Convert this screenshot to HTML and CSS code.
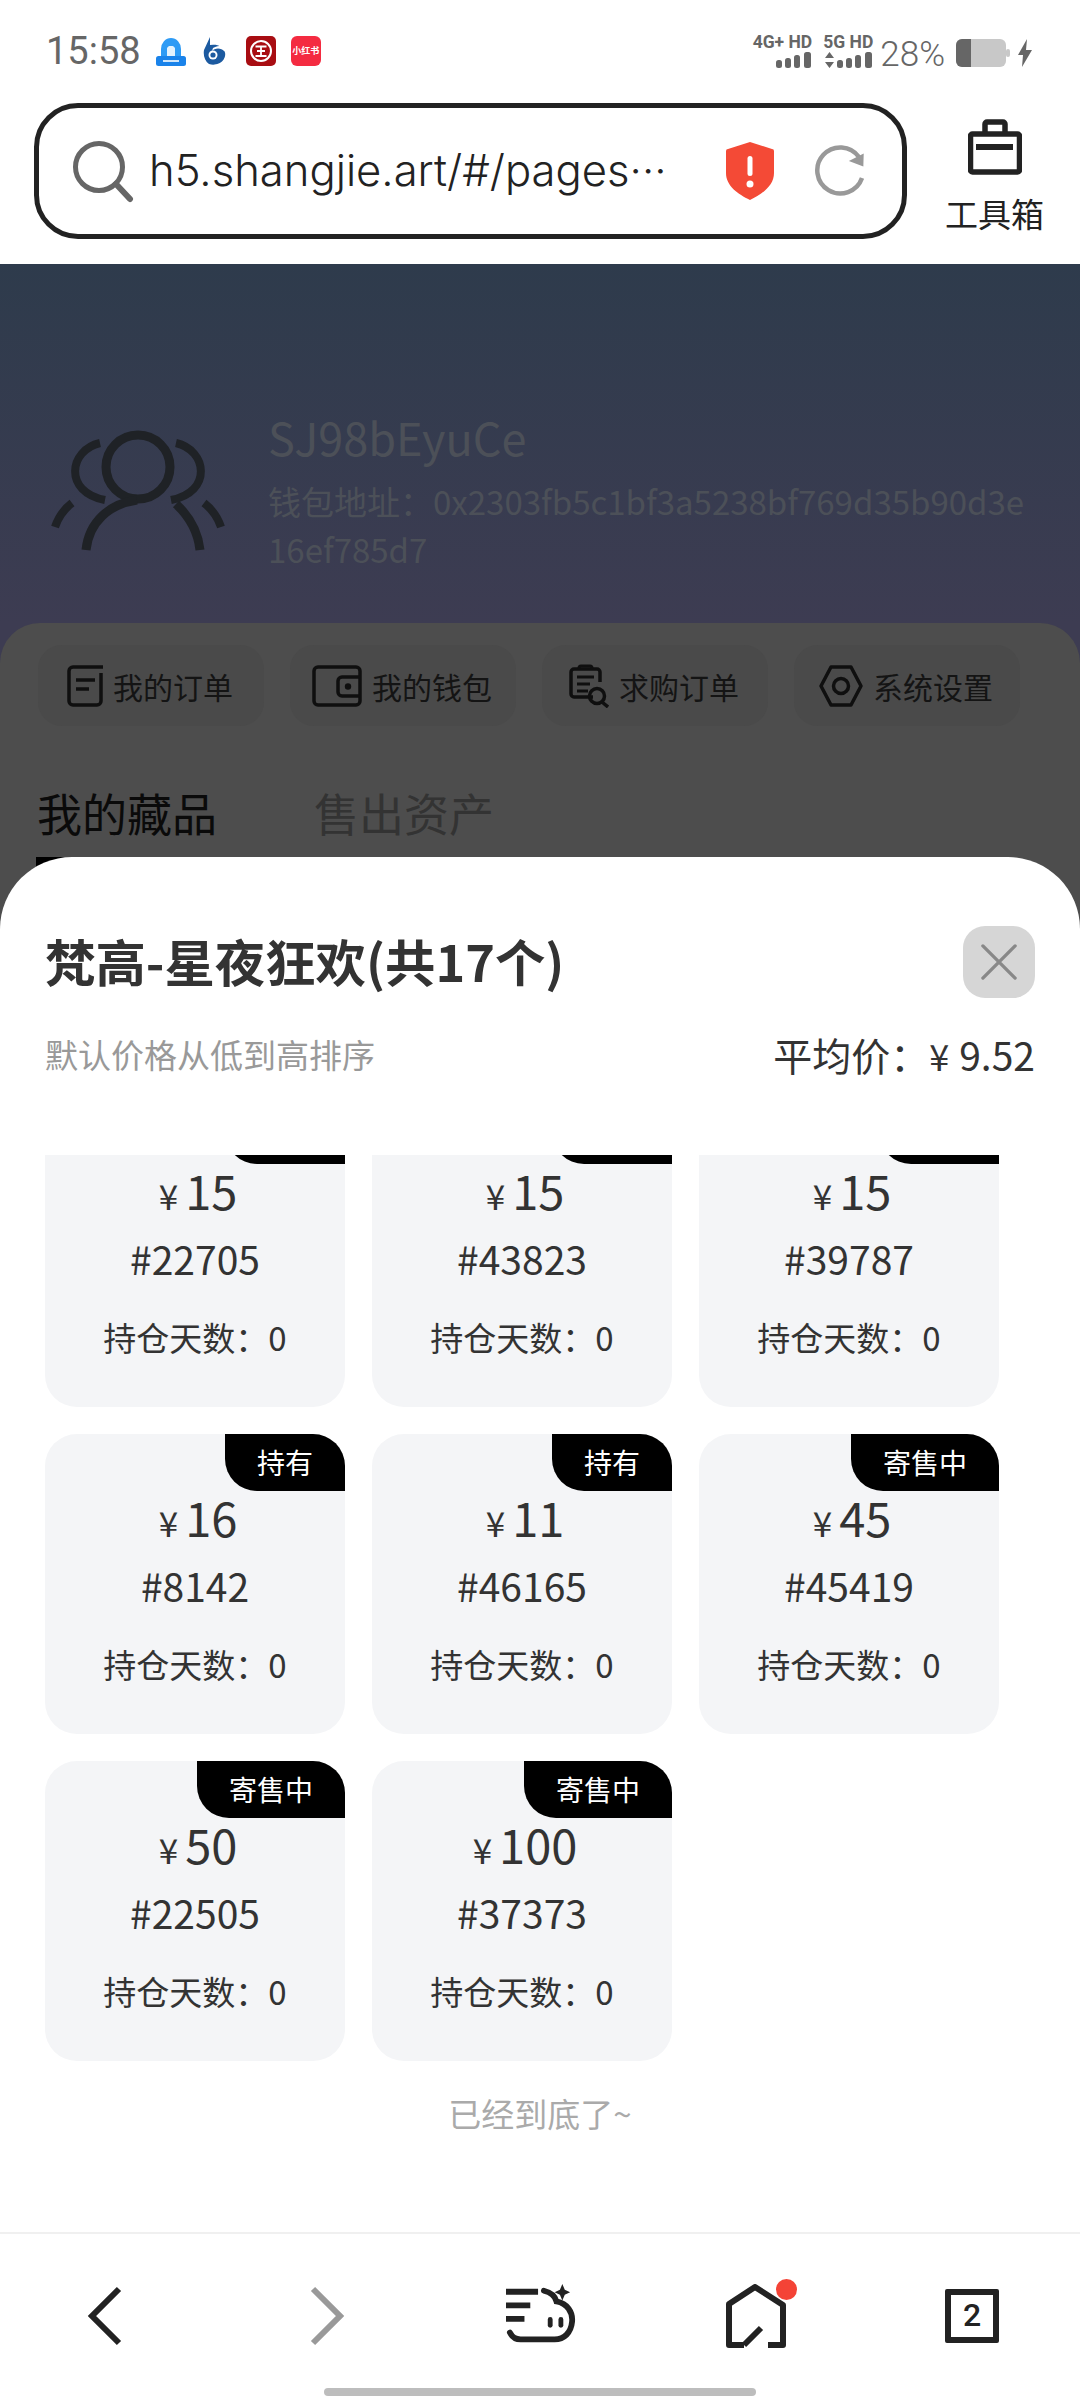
FILE: index.html
```html
<!DOCTYPE html>
<html lang="zh-CN">
<head>
    <meta charset="UTF-8">
    <meta name="viewport" content="width=device-width, initial-scale=1.0">
    <title>我的藏品</title>
    <link rel="stylesheet" href="styles.css">
</head>
<body>

<div class="status-bar">
    <div class="status-left">
        <span class="time">15:58</span>
        <svg class="app-icon" viewBox="0 0 30 30"><path d="M5 21V13a10 11 0 0 1 20 0v8h-6v-7a4 4 0 0 0-8 0v7z" fill="#2e9bf5"/><path d="M11 21v-7a4 4 0 0 1 8 0v7z" fill="#e4f2fd"/><rect x="0" y="20" width="30" height="10" rx="2.500" fill="#1a83ea"/><rect x="7" y="24" width="16" height="2" fill="#cfe6fb"/></svg>
        <svg class="app-icon" viewBox="0 0 30 30"><path d="M3 14 9 1v8a12 10 0 1 1-1 19C4 25 2 20 3 14z" fill="#1c5aa0"/><path d="M11 15a7 5 0 0 1 12 0h7c-2-5-10-7-18-3z" fill="#fff"/><circle cx="12" cy="19" r="4.500" fill="#fff"/><circle cx="12" cy="19" r="2.600" fill="#1c5aa0"/></svg>
        <svg class="app-icon" viewBox="0 0 30 30"><rect width="30" height="30" rx="5" fill="#a80d12"/><circle cx="15" cy="15" r="10" fill="none" stroke="#fff" stroke-width="2"/><path d="M9.500 10.500h11M11 15h8M9.500 20h11M15 10.500v9.500" stroke="#fff" stroke-width="1.800" fill="none"/></svg>
        <span class="app-tile">小红书</span>
    </div>
    <div class="status-right">
        <div class="net">
            <span class="net-label">4G+ HD</span>
            <svg class="net-bars" width="36" height="16" viewBox="0 0 36 16"><rect x="0" y="8" width="6" height="8" rx="2.500"/><rect x="9" y="6" width="6" height="10" rx="2.500"/><rect x="18" y="3" width="6" height="13" rx="2.500"/><rect x="28" y="0" width="7" height="16" rx="2.500"/></svg>
        </div>
        <div class="net">
            <span class="net-label">5G HD</span>
            <svg class="net-bars" width="48" height="16" viewBox="0 0 48 16"><path d="M4.500 0 9 6H0zM4.500 16 0 10h9z"/><rect x="12" y="8" width="6" height="8" rx="2.500"/><rect x="21" y="6" width="6" height="10" rx="2.500"/><rect x="30" y="3" width="6" height="13" rx="2.500"/><rect x="40" y="0" width="7" height="16" rx="2.500"/></svg>
        </div>
        <span class="battery-text">28%</span>
        <svg width="54" height="28" viewBox="0 0 54 28"><rect x="0" y="0" width="50" height="28" rx="6" fill="#c8c8c8"/><path d="M6 0h9v28H6a6 6 0 0 1-6-6V6a6 6 0 0 1 6-6z" fill="#666"/><rect x="50" y="10" width="4" height="8" rx="2" fill="#c8c8c8"/></svg>
        <svg class="bolt" width="14" height="28" viewBox="0 0 14 28"><path d="M9 0 0 16h5l-1 12 10-17H8z" fill="#666"/></svg>
    </div>
</div>

<div class="toolbar">
    <div class="address-box">
        <svg width="64" height="64" viewBox="0 0 64 64"><circle cx="29" cy="28" r="23.500" fill="none" stroke="#666" stroke-width="5"/><path d="M46 45 60 60" stroke="#666" stroke-width="6" stroke-linecap="round"/></svg>
        <span class="url">h5.shangjie.art/#/pages···</span>
        <svg class="shield" width="48" height="58" viewBox="0 0 48 58"><path d="M24 0 46 7a2 2 0 0 1 2 2v22c0 13-12 21-24 27C12 52 0 44 0 31V9a2 2 0 0 1 2-2z" fill="#f44a36"/><rect x="21.500" y="14" width="5" height="20" rx="2.500" fill="#fff"/><circle cx="24" cy="42" r="3.500" fill="#fff"/></svg>
        <svg class="reload" width="52" height="52" viewBox="0 0 52 52"><path d="M47 33A23 23 0 1 1 44 12" fill="none" stroke="#999" stroke-width="4.500"/><path d="M34 17 49 21 48 8z" fill="#999" transform="rotate(6 44 15)"/></svg>
    </div>
    <div class="toolbox">
        <svg width="54" height="56" viewBox="0 0 54 56"><path d="M17 13V5a2 2 0 0 1 2-2h16a2 2 0 0 1 2 2v8" fill="none" stroke="#222" stroke-width="5.500"/><rect x="2.500" y="15" width="49" height="38" rx="2" fill="none" stroke="#222" stroke-width="5.500"/><rect x="8" y="25" width="37" height="6" fill="#222"/></svg>
        <span class="toolbox-label">工具箱</span>
    </div>
</div>

<div class="page">
    <div class="profile">
        <svg class="avatar" width="174" height="122" viewBox="0 0 174 122">
            <g fill="none" stroke="#1f2226" stroke-width="9">
                <circle cx="87" cy="37" r="32"/>
                <path d="M35 120C38 92 58 74 86 70"/>
                <path d="M125 74C138 86 147 102 149 120"/>
                <path d="M49 13C18 20 12 62 54 70" stroke-width="8"/>
                <path d="M125 13C156 20 162 62 120 70" stroke-width="8"/>
                <path d="M21 73C12 80 7 88 4 97" stroke-width="8"/>
                <path d="M153 73C162 80 167 88 170 97" stroke-width="8"/>
            </g>
        </svg>
        <div class="profile-text">
            <div class="nickname">SJ98bEyuCe</div>
            <div class="wallet">钱包地址&#xFF1A;0x2303fb5c1bf3a5238bf769d35b90d3e16ef785d7</div>
        </div>
    </div>

    <div class="panel">
        <div class="menu-row">
            <div class="menu-item">
                <svg width="36" height="42" viewBox="0 0 36 42"><path d="M36 2H6a4 4 0 0 0-4 4v30a4 4 0 0 0 4 4h24a4 4 0 0 0 4-4V8" fill="none" stroke="#0f0f0f" stroke-width="3.500"/><path d="M9 15h19M9 24h13" stroke="#0f0f0f" stroke-width="3.500"/></svg>
                <span>我的订单</span>
            </div>
            <div class="menu-item">
                <svg width="50" height="42" viewBox="0 0 50 42"><rect x="2" y="2" width="46" height="38" rx="4" fill="none" stroke="#0f0f0f" stroke-width="3.500"/><path d="M48 12H30a4 4 0 0 0-4 4v11a4 4 0 0 0 4 4h18" fill="none" stroke="#0f0f0f" stroke-width="3.500"/><circle cx="36" cy="21.500" r="3.200" fill="#0f0f0f"/></svg>
                <span>我的钱包</span>
            </div>
            <div class="menu-item">
                <svg width="40" height="44" viewBox="0 0 40 44"><path d="M24 33H5a3 3 0 0 1-3-3V8a3 3 0 0 1 3-3h23a3 3 0 0 1 3 3v10" fill="none" stroke="#0f0f0f" stroke-width="3.500"/><path d="M10 5V4a2 2 0 0 1 2-2h9a2 2 0 0 1 2 2v1M8 13h17M8 20h13M8 27h11" fill="none" stroke="#0f0f0f" stroke-width="3"/><circle cx="28" cy="32" r="7.500" fill="none" stroke="#0f0f0f" stroke-width="3.500"/><path d="M33 38 39 43" stroke="#0f0f0f" stroke-width="3.500"/></svg>
                <span>求购订单</span>
            </div>
            <div class="menu-item">
                <svg width="44" height="42" viewBox="0 0 44 42"><path d="M12 2h20l10 19-10 19H12L2 21z" fill="none" stroke="#0f0f0f" stroke-width="3.500" stroke-linejoin="round"/><circle cx="22" cy="21" r="7.500" fill="none" stroke="#0f0f0f" stroke-width="3.500"/></svg>
                <span>系统设置</span>
            </div>
        </div>
        <div class="tabs">
            <div class="tab tab-active">我的藏品</div>
            <div class="tab">售出资产</div>
        </div>
    </div>
</div>

<div class="sheet">
    <div class="sheet-head">
        <div class="sheet-title">梵高-星夜狂欢(共17个)</div>
        <div class="close-btn">
            <svg width="36" height="36" viewBox="0 0 38 38"><path d="M2 2 36 36M36 2 2 36" stroke="#888" stroke-width="3.500" stroke-linecap="round"/></svg>
        </div>
    </div>
    <div class="sheet-sub">
        <span class="sort-note">默认价格从低到高排序</span>
        <span class="avg-price">平均价&#xFF1A;<span class="avg-yen">¥</span>9.52</span>
    </div>

    <div class="list-clip">
        <div class="grid">
            <div class="card"><span class="badge">持有</span><div class="price"><span class="yen">¥</span>15</div><div class="code">#22705</div><div class="days">持仓天数&#xFF1A;0</div></div>
            <div class="card"><span class="badge">持有</span><div class="price"><span class="yen">¥</span>15</div><div class="code">#43823</div><div class="days">持仓天数&#xFF1A;0</div></div>
            <div class="card"><span class="badge">持有</span><div class="price"><span class="yen">¥</span>15</div><div class="code">#39787</div><div class="days">持仓天数&#xFF1A;0</div></div>
            <div class="card"><span class="badge">持有</span><div class="price"><span class="yen">¥</span>16</div><div class="code">#8142</div><div class="days">持仓天数&#xFF1A;0</div></div>
            <div class="card"><span class="badge">持有</span><div class="price"><span class="yen">¥</span>11</div><div class="code">#46165</div><div class="days">持仓天数&#xFF1A;0</div></div>
            <div class="card"><span class="badge">寄售中</span><div class="price"><span class="yen">¥</span>45</div><div class="code">#45419</div><div class="days">持仓天数&#xFF1A;0</div></div>
            <div class="card"><span class="badge">寄售中</span><div class="price"><span class="yen">¥</span>50</div><div class="code">#22505</div><div class="days">持仓天数&#xFF1A;0</div></div>
            <div class="card"><span class="badge">寄售中</span><div class="price"><span class="yen">¥</span>100</div><div class="code">#37373</div><div class="days">持仓天数&#xFF1A;0</div></div>
        </div>
        <div class="list-end">已经到底了~</div>
    </div>

    <div class="bottom-nav">
        <div class="nav-row">
            <svg width="70" height="70" viewBox="0 0 70 70"><path d="M46 8 19 35l27 27" fill="none" stroke="#222" stroke-width="6"/></svg>
            <svg width="70" height="70" viewBox="0 0 70 70"><path d="M24 8l27 27-27 27" fill="none" stroke="#999" stroke-width="6"/></svg>
            <svg width="72" height="68" viewBox="0 0 74 70"><path d="M2 10H35M2 24H27M2 38H21" stroke="#222" stroke-width="6"/><path d="M41 9C49 11 53 16 54 20C65 22 71 31 70 41C69 52 62 59 52 59H17C11 59 8 56 6 52" fill="none" stroke="#222" stroke-width="6" stroke-linecap="round"/><rect x="45" y="36" width="5" height="11" rx="2.500" fill="#222"/><rect x="56" y="36" width="5" height="11" rx="2.500" fill="#222"/><path d="M60 2 62.500 8 68 10.500 62.500 13 60 19 57.500 13 52 10.500 57.500 8z" fill="#222"/></svg>
            <div class="home-wrap">
                <svg width="60" height="64" viewBox="0 0 60 64"><path d="M18 61H3V20L29 3 57 21V61H42" fill="none" stroke="#222" stroke-width="6" stroke-linejoin="round"/><path d="M18 61 35 44" fill="none" stroke="#222" stroke-width="6"/></svg>
                <span class="red-dot"></span>
            </div>
            <div class="tab-count">2</div>
        </div>
        <div class="home-pill"></div>
    </div>
</div>

</body>
</html>
```

FILE: styles.css
```css
* {
    box-sizing: border-box;
}

body {
    margin: 0;
    width: 1080px;
    height: 2400px;
    overflow: hidden;
    position: relative;
    background: #fff;
    font-family: "Noto Sans CJK SC", "Noto Sans", sans-serif;
    color: #333;
}

/* status bar */
.status-bar {
    height: 103px;
    display: flex;
    justify-content: space-between;
    padding: 34px 48px 0 46px;
}

.status-left {
    display: flex;
    align-items: flex-start;
    gap: 15px;
}

.time {
    font-family: Roboto, sans-serif;
    font-size: 38px;
    line-height: 34px;
    color: #666;
}

.app-icon {
    width: 30px;
    height: 30px;
    margin-top: 2px;
}

.app-tile {
    width: 30px;
    height: 30px;
    margin-top: 2px;
    border-radius: 6px;
    background: #f42b41;
    color: #fff;
    font-size: 9px;
    font-weight: 700;
    line-height: 30px;
    text-align: center;
    white-space: nowrap;
}

.status-right {
    display: flex;
    align-items: flex-start;
    gap: 11px;
}

.net {
    display: flex;
    flex-direction: column;
    align-items: flex-end;
    gap: 2px;
}

.net-label {
    font-family: Roboto, sans-serif;
    font-size: 17.5px;
    font-weight: 700;
    line-height: 16px;
    color: #666;
}

.net-bars {
    fill: #666;
}

.battery-text {
    font-family: Roboto, sans-serif;
    font-weight: 300;
    font-size: 35px;
    line-height: 34px;
    color: #666;
    margin: 4px 0 0 -4px;
}

.status-right svg:not(.net-bars) {
    margin-top: 5px;
}

.status-right .bolt {
    margin-left: -3px;
}

/* browser toolbar */
.toolbar {
    height: 161px;
    display: flex;
    padding-left: 34px;
}

.address-box {
    width: 873px;
    height: 136px;
    border: 5px solid #222;
    border-radius: 44px;
    display: flex;
    align-items: center;
    padding-left: 31px;
}

.url {
    font-family: Inter, sans-serif;
    font-weight: 300;
    font-size: 43.6px;
    line-height: 60px;
    color: #222;
    margin-left: 15px;
    width: 530px;
    white-space: nowrap;
}

.shield {
    margin-left: 47px;
}

.reload {
    margin-left: 41px;
}

.toolbox {
    flex: 1;
    display: flex;
    flex-direction: column;
    align-items: center;
    padding: 16px 0 0 2px;
}

.toolbox-label {
    font-size: 33px;
    line-height: 44px;
    color: #222;
    margin-top: 16px;
}

/* dimmed page behind the sheet */
.page {
    height: 2136px;
    background: linear-gradient(#2e3b4c, #3d3c52 359px);
}

.profile {
    height: 359px;
    display: flex;
    align-items: flex-start;
    padding: 143px 0 0 51px;
}

.avatar {
    margin-top: 23px;
    flex-shrink: 0;
}

.profile-text {
    margin-left: 43px;
    width: 764px;
}

.nickname {
    font-size: 45px;
    line-height: 60px;
    color: #4c5058;
}

.wallet {
    font-size: 33px;
    line-height: 48px;
    color: #4c5058;
    word-break: break-all;
    margin-top: 10px;
}

.panel {
    height: 1777px;
    background: #4d4d4d;
    border-radius: 40px 40px 0 0;
    padding: 22px 0 0 38px;
}

.menu-row {
    display: flex;
    gap: 26px;
}

.menu-item {
    width: 226px;
    height: 81px;
    background: #4a4a4a;
    border-radius: 24px;
    display: flex;
    align-items: center;
    justify-content: center;
    gap: 10px;
    padding-right: 2px;
    font-size: 30px;
    color: #141414;
}

.tabs {
    display: flex;
    gap: 97px;
    margin: 57px 0 0 -1px;
}

.tab {
    font-size: 45px;
    line-height: 60px;
    color: #333;
    padding-bottom: 24px;
}

.tab-active {
    color: #0a0a0a;
    position: relative;
}

.tab-active::after {
    content: "";
    position: absolute;
    left: -1px;
    right: 0;
    bottom: 0;
    height: 10px;
    background: #000;
}

/* bottom sheet */
.sheet {
    position: absolute;
    left: 0;
    right: 0;
    top: 857px;
    bottom: 0;
    background: #fff;
    border-radius: 72px 72px 0 0;
    display: flex;
    flex-direction: column;
}

.sheet-head {
    display: flex;
    justify-content: space-between;
    align-items: center;
    padding: 69px 45px 0;
}

.sheet-title {
    font-size: 50.4px;
    font-weight: 700;
    line-height: 72px;
    color: #333;
    margin-top: -2px;
}

.close-btn {
    width: 72px;
    height: 72px;
    border-radius: 22px;
    background: #d6d6d6;
    display: flex;
    align-items: center;
    justify-content: center;
}

.sheet-sub {
    display: flex;
    justify-content: space-between;
    align-items: center;
    height: 54px;
    padding: 0 45px;
    margin-top: 29px;
}

.sort-note {
    font-size: 33px;
    color: #999;
}

.avg-price {
    font-size: 39px;
    color: #333;
}

.avg-yen {
    font-size: 36px;
    margin-right: 10px;
}

.list-clip {
    flex: 1;
    overflow: hidden;
    margin-top: 74px;
    padding-left: 45px;
}

.grid {
    display: grid;
    grid-template-columns: repeat(3, 300px);
    gap: 27px;
    margin-top: -48px;
}

.card {
    height: 300px;
    background: #f4f5f7;
    border-radius: 32px;
    position: relative;
    text-align: center;
    padding-top: 53px;
}

.badge {
    position: absolute;
    top: 0;
    right: 0;
    height: 57px;
    padding: 0 32px;
    background: #000;
    color: #fff;
    font-size: 28px;
    line-height: 57px;
    border-radius: 0 32px 0 32px;
}

.price {
    font-size: 47px;
    line-height: 60px;
    padding-left: 6px;
}

.yen {
    font-size: 35px;
    margin-right: 7px;
}

.code {
    font-size: 39px;
    line-height: 50px;
    margin-top: 8px;
}

.days {
    font-size: 33px;
    line-height: 48px;
    margin-top: 30px;
}

.list-end {
    margin: 27px 0 0 -45px;
    text-align: center;
    font-size: 33px;
    line-height: 50px;
    color: #aaa;
}

/* browser bottom bar */
.bottom-nav {
    height: 168px;
    border-top: 2px solid #f0f0f0;
    background: #fff;
    display: flex;
    flex-direction: column;
    align-items: center;
    padding-top: 47px;
}

.nav-row {
    width: 100%;
    height: 70px;
    display: grid;
    grid-template-columns: repeat(5, 216px);
    justify-items: center;
    align-items: center;
}

.home-wrap {
    position: relative;
    height: 64px;
}

.red-dot {
    position: absolute;
    top: -5px;
    right: -11px;
    width: 21px;
    height: 21px;
    border-radius: 50%;
    background: #f44336;
}

.tab-count {
    width: 54px;
    height: 54px;
    border: 6px solid #222;
    border-radius: 2px;
    font-family: Roboto, sans-serif;
    font-size: 32px;
    font-weight: 500;
    line-height: 41px;
    text-align: center;
    color: #222;
}

.home-pill {
    width: 432px;
    height: 8px;
    margin-top: 37px;
    border-radius: 4px;
    background: #bdbdbd;
}
```
